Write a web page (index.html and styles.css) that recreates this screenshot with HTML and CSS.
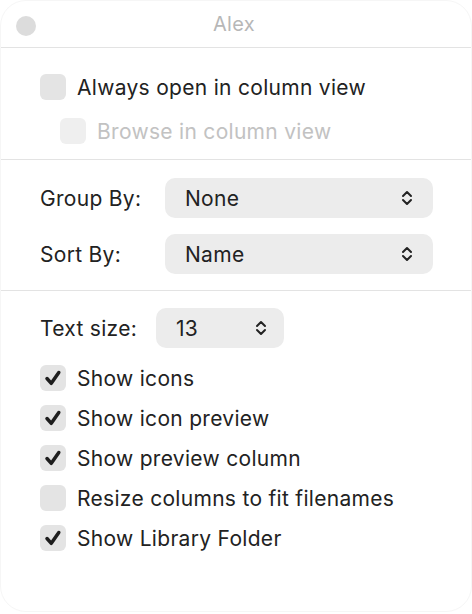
FILE: index.html
```html
<!DOCTYPE html>
<html>
<head>
<meta charset="utf-8">
<link rel="stylesheet" href="styles.css">
</head>
<body>
<div class="window">
  <div class="titlebar">
    <span class="light"></span>
    <span class="title">Alex</span>
  </div>
  <div class="section s1">
    <div class="row">
      <span class="box"></span><span class="label">Always open in column view</span>
    </div>
    <div class="row indent disabled">
      <span class="box"></span><span class="label">Browse in column view</span>
    </div>
  </div>
  <div class="section s2">
    <div class="field">
      <span class="flabel w1">Group By:</span>
      <div class="popup wide"><span>None</span>
        <svg class="chev" viewBox="0 0 12 18" width="12" height="18"><path d="M2 7 L6 3 L10 7 M2 11 L6 15 L10 11" fill="none" stroke="#222" stroke-width="2" stroke-linecap="round" stroke-linejoin="round"/></svg>
      </div>
    </div>
    <div class="field">
      <span class="flabel w1">Sort By:</span>
      <div class="popup wide"><span>Name</span>
        <svg class="chev" viewBox="0 0 12 18" width="12" height="18"><path d="M2 7 L6 3 L10 7 M2 11 L6 15 L10 11" fill="none" stroke="#222" stroke-width="2" stroke-linecap="round" stroke-linejoin="round"/></svg>
      </div>
    </div>
  </div>
  <div class="section s3">
    <div class="field">
      <span class="flabel w2">Text size:</span>
      <div class="popup narrow"><span>13</span>
        <svg class="chev" viewBox="0 0 12 18" width="12" height="18"><path d="M2 7 L6 3 L10 7 M2 11 L6 15 L10 11" fill="none" stroke="#222" stroke-width="2" stroke-linecap="round" stroke-linejoin="round"/></svg>
      </div>
    </div>
    <div class="checks">
      <div class="row"><span class="box"><svg viewBox="0 0 26 26" width="26" height="26"><path d="M7 13.5 L11.3 18.3 L18.8 7.5" fill="none" stroke="#1e1e1e" stroke-width="3.5" stroke-linecap="round" stroke-linejoin="round"/></svg></span><span class="label">Show icons</span></div>
      <div class="row"><span class="box"><svg viewBox="0 0 26 26" width="26" height="26"><path d="M7 13.5 L11.3 18.3 L18.8 7.5" fill="none" stroke="#1e1e1e" stroke-width="3.5" stroke-linecap="round" stroke-linejoin="round"/></svg></span><span class="label">Show icon preview</span></div>
      <div class="row"><span class="box"><svg viewBox="0 0 26 26" width="26" height="26"><path d="M7 13.5 L11.3 18.3 L18.8 7.5" fill="none" stroke="#1e1e1e" stroke-width="3.5" stroke-linecap="round" stroke-linejoin="round"/></svg></span><span class="label">Show preview column</span></div>
      <div class="row"><span class="box"></span><span class="label">Resize columns to fit filenames</span></div>
      <div class="row"><span class="box"><svg viewBox="0 0 26 26" width="26" height="26"><path d="M7 13.5 L11.3 18.3 L18.8 7.5" fill="none" stroke="#1e1e1e" stroke-width="3.5" stroke-linecap="round" stroke-linejoin="round"/></svg></span><span class="label">Show Library Folder</span></div>
    </div>
  </div>
</div>
</body>
</html>
```

FILE: styles.css
```css
html, body {
  margin: 0;
  padding: 0;
  background: #ffffff;
}
body {
  font-family: Inter, "Liberation Sans", sans-serif;
  color: #222222;
}
.window {
  box-sizing: border-box;
  width: 472px;
  height: 612px;
  border: 1px solid #f6f6f6;
  border-radius: 26px;
  background: #ffffff;
}
.titlebar {
  position: relative;
  height: 46px;
  border-bottom: 1px solid #e3e3e3;
  display: flex;
  align-items: center;
  justify-content: center;
}
.light {
  position: absolute;
  left: 15px;
  top: 15px;
  width: 20px;
  height: 20px;
  border-radius: 50%;
  background: #dcdcdc;
}
.title {
  font-size: 20px;
  letter-spacing: 0.3px;
  color: #b7b7b7;
  margin-left: -4px;
}
.section {
  border-bottom: 1px solid #e3e3e3;
}
.s1 {
  padding: 19px 0 8px 39px;
  display: flex;
  flex-direction: column;
  gap: 4px;
}
.s2 {
  padding: 18px 0 16px 39px;
  display: flex;
  flex-direction: column;
  gap: 16px;
}
.s3 {
  border-bottom: none;
  padding: 17px 0 0 39px;
}
.row {
  height: 40px;
  display: flex;
  align-items: center;
}
.row.indent {
  padding-left: 20px;
}
.box {
  box-sizing: border-box;
  width: 26px;
  height: 26px;
  border-radius: 6px;
  background: #e4e4e4;
  margin-right: 11px;
  flex: none;
  display: flex;
}
.label, .flabel, .popup {
  font-size: 21px;
  letter-spacing: 0.3px;
}
.disabled .box {
  background: #efefef;
}
.disabled .label {
  color: #c2c2c2;
}
.field {
  display: flex;
  align-items: center;
}
.w1 {
  width: 125px;
}
.w2 {
  width: 116px;
}
.popup {
  box-sizing: border-box;
  height: 40px;
  border-radius: 10px;
  background: #ececec;
  display: flex;
  align-items: center;
  justify-content: space-between;
  padding: 0 20px 0 20px;
}
.popup.wide {
  width: 268px;
}
.popup.narrow {
  width: 128px;
  padding-right: 17px;
}
.chev {
  display: block;
}
.checks {
  margin-top: 10px;
}
```
